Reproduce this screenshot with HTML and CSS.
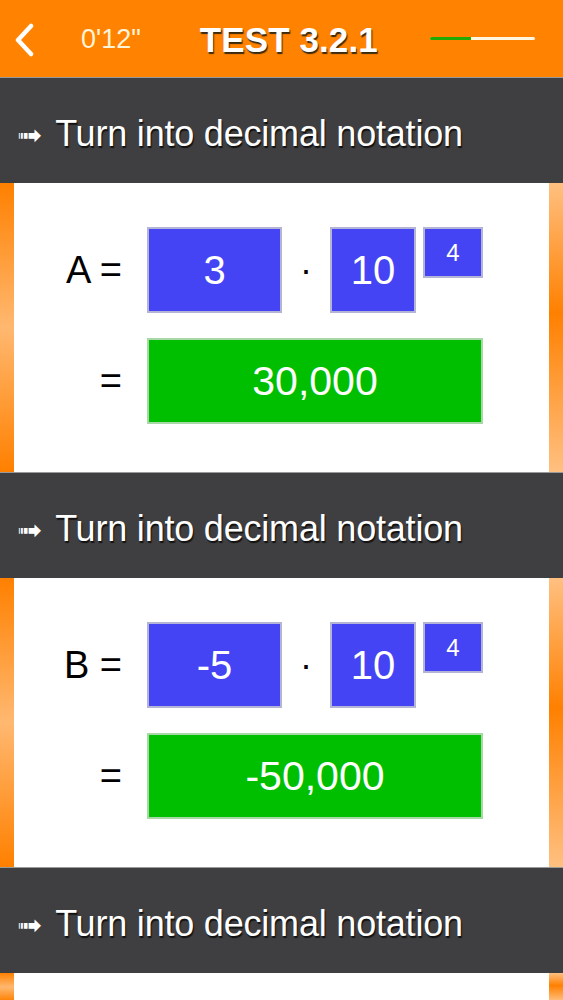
FILE: index.html
```html
<!DOCTYPE html>
<html>
<head>
<meta charset="utf-8">
<link rel="stylesheet" href="styles.css">
</head>
<body>
<header class="topbar">
  <svg class="back" width="20" height="34" viewBox="0 0 20 34"><path d="M17 3 L4 17 L17 31" fill="none" stroke="#fff" stroke-width="4.5" stroke-linecap="round" stroke-linejoin="round"/></svg>
  <span class="time">0'12"</span>
  <span class="title">TEST 3.2.1</span>
  <div class="progress"><div class="done"></div></div>
</header>

<section class="band"><span class="arrow">➟</span><span class="btext">Turn into decimal notation</span></section>
<section class="card">
  <div class="strip left"></div>
  <div class="content">
    <div class="row">
      <span class="label">A =</span>
      <div class="box blue wide">3</div>
      <span class="dot">·</span>
      <div class="box blue base">10</div>
      <div class="box blue sup">4</div>
    </div>
    <div class="row">
      <span class="label">=</span>
      <div class="box green">30,000</div>
    </div>
  </div>
  <div class="strip right"></div>
</section>

<section class="band"><span class="arrow">➟</span><span class="btext">Turn into decimal notation</span></section>
<section class="card">
  <div class="strip left"></div>
  <div class="content">
    <div class="row">
      <span class="label">B =</span>
      <div class="box blue wide">-5</div>
      <span class="dot">·</span>
      <div class="box blue base">10</div>
      <div class="box blue sup">4</div>
    </div>
    <div class="row">
      <span class="label">=</span>
      <div class="box green">-50,000</div>
    </div>
  </div>
  <div class="strip right"></div>
</section>

<section class="band"><span class="arrow">➟</span><span class="btext">Turn into decimal notation</span></section>
<section class="card short">
  <div class="strip left"></div>
  <div class="content"></div>
  <div class="strip right"></div>
</section>
</body>
</html>
```

FILE: styles.css
```css
html, body {
  margin: 0;
  padding: 0;
  background: #fff;
  font-family: "Liberation Sans", Arial, sans-serif;
  overflow: hidden;
}
.topbar {
  height: 77px;
  background: #ff8200;
  display: flex;
  align-items: center;
  position: relative;
}
.back {
  margin-left: 14px;
  margin-top: 2px;
}
.time {
  margin-left: 47px;
  color: #fff3d8;
  font-size: 27px;
  margin-top: 2px;
}
.title {
  margin-left: 59px;
  color: #fff;
  font-weight: bold;
  font-size: 35px;
  text-shadow: 1px 2px 1px #3a2a10;
  letter-spacing: 0.1px;
  margin-top: 2px;
}
.progress {
  margin-left: 52px;
  width: 105px;
  height: 3px;
  background: #fff6e0;
  border-radius: 2px;
  display: flex;
}
.done {
  width: 41px;
  background: #22aa00;
  border-radius: 2px 0 0 2px;
}
.band {
  height: 106px;
  background: #3f3e40;
  border-top: 1px solid #9a9a9a;
  box-sizing: border-box;
  display: flex;
  align-items: center;
  padding-left: 17px;
  padding-top: 6px;
  color: #fff;
}
.arrow {
  font-family: "DejaVu Sans", sans-serif;
  font-size: 30px;
  margin-right: 13px;
  margin-top: 2px;
}
.btext {
  font-size: 36px;
  text-shadow: 1px 2px 1px #111;
  letter-spacing: -0.2px;
}
.card {
  display: flex;
  height: 289px;
}
.card.short {
  height: 28px;
}
.strip {
  width: 14px;
  flex: none;
}
.strip.left {
  background: linear-gradient(to bottom, #ff8000 0%, #ffb870 50%, #ff8000 100%);
}
.strip.right {
  background: linear-gradient(to bottom, #ffc080 0%, #ff8000 45%, #ffc080 100%);
}
.content {
  flex: 1;
  background: #fff;
  padding-top: 44px;
  display: flex;
  flex-direction: column;
  gap: 25px;
}
.row {
  display: flex;
  align-items: flex-start;
}
.label {
  width: 108px;
  text-align: right;
  font-size: 38px;
  color: #000;
  line-height: 86px;
  margin-right: 25px;
}
.box {
  box-sizing: border-box;
  height: 86px;
  border: 2px solid #b4b4d6;
  color: #fff;
  font-size: 40px;
  display: flex;
  align-items: center;
  justify-content: center;
}
.blue {
  background: #4444f5;
}
.green {
  background: #00bf00;
  border-color: #a8d8a8;
  width: 336px;
  font-size: 41px;
}
.wide {
  width: 135px;
}
.dot {
  width: 48px;
  text-align: center;
  font-size: 36px;
  line-height: 86px;
}
.base {
  width: 86px;
}
.sup {
  width: 60px;
  height: 51px;
  margin-left: 7px;
  font-size: 24px;
  align-items: flex-start;
  padding-top: 10px;
}
```
